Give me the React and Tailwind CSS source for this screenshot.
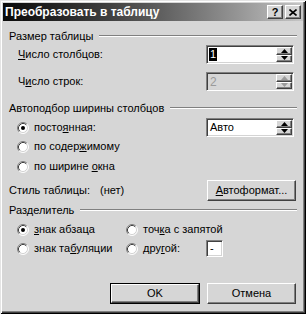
import React from "react";

const sunken =
  "border border-t-[#808080] border-l-[#808080] border-r-white border-b-white shadow-[inset_1px_1px_0_#404040,inset_-1px_-1px_0_#d4d4d4]";
const raised =
  "border border-t-white border-l-white border-r-[#404040] border-b-[#404040] shadow-[inset_-1px_-1px_0_#808080]";

function Spin({ disabled }) {
  const c = disabled ? "#9a9a9a" : "#000";
  return (
    <div className="flex flex-col w-[16px] h-full">
      <div className={`flex-1 flex items-center justify-center bg-[#d6d6d6] ${raised}`}>
        <svg width="7" height="4" viewBox="0 0 7 4">
          <path d="M3.5 0 L7 4 L0 4Z" fill={c} />
        </svg>
      </div>
      <div className={`flex-1 flex items-center justify-center bg-[#d6d6d6] ${raised}`}>
        <svg width="7" height="4" viewBox="0 0 7 4">
          <path d="M0 0 L7 0 L3.5 4Z" fill={c} />
        </svg>
      </div>
    </div>
  );
}

function SpinInput({ children, disabled }) {
  return (
    <div
      className={`w-[88px] h-[19px] flex p-[1px] ${sunken} ${disabled ? "bg-[#d6d6d6]" : "bg-white"}`}
    >
      <div className="flex-1 flex items-center pl-[1px]">{children}</div>
      <Spin disabled={disabled} />
    </div>
  );
}

function Radio({ checked }) {
  return (
    <svg width="12" height="12" viewBox="0 0 12 12" className="shrink-0">
      <circle cx="6" cy="6" r="5" fill="#fff" />
      <path d="M2.11 9.89 A5.5 5.5 0 0 1 9.89 2.11" stroke="#808080" fill="none" />
      <path d="M2.11 9.89 A5.5 5.5 0 0 0 9.89 2.11" stroke="#fff" fill="none" />
      <path d="M2.82 9.18 A4.5 4.5 0 0 1 9.18 2.82" stroke="#404040" fill="none" />
      <path d="M2.82 9.18 A4.5 4.5 0 0 0 9.18 2.82" stroke="#d4d4d4" fill="none" />
      {checked && <circle cx="6" cy="6" r="2" fill="#000" />}
    </svg>
  );
}

function GroupHeader({ children }) {
  return (
    <div className="flex items-center h-[14px] pl-[6px] pr-[6px]">
      <span className="whitespace-nowrap">{children}</span>
      <div className="flex-1 ml-[6px] h-[2px] border-t border-t-[#808080] border-b border-b-white" />
    </div>
  );
}

function Button({ children, def, w }) {
  return (
    <div
      className={`${w} h-full ${def ? "border border-black" : ""} flex`}
    >
      <div className={`flex-1 flex items-center justify-center bg-[#d6d6d6] ${raised}`}>
        {children}
      </div>
    </div>
  );
}

export default function App() {
  return (
    <div
      className="w-[306px] h-[314px] bg-[#d6d6d6] p-[3px] flex flex-col text-[11px] text-black leading-none shadow-[inset_1px_1px_0_#e4e4e4,inset_-1px_-1px_0_#000,inset_2px_2px_0_#fff,inset_-2px_-2px_0_#404040,inset_-3px_-3px_0_#808080]"
      style={{ fontFamily: '"Liberation Sans", Arial, sans-serif' }}
    >
      {/* Title bar */}
      <div className="h-[18px] shrink-0 flex items-center bg-gradient-to-r from-[#0a0a0a] via-[#5a5a5a] to-[#c6c6c6] pl-[2px] pr-[2px]">
        <span className="text-white font-bold text-[12px] whitespace-nowrap">
          Преобразовать в таблицу
        </span>
        <div className="ml-auto flex gap-[2px]">
          <div className={`w-[16px] h-[14px] bg-[#d6d6d6] flex items-center justify-center ${raised}`}>
            <span className="font-bold text-[11px] leading-none">?</span>
          </div>
          <div className={`w-[16px] h-[14px] bg-[#d6d6d6] flex items-center justify-center ${raised}`}>
            <svg width="8" height="7" viewBox="0 0 8 7">
              <path d="M0.5 0.5 L7.5 6.5 M7.5 0.5 L0.5 6.5" stroke="#000" strokeWidth="1.6" />
            </svg>
          </div>
        </div>
      </div>

      {/* Размер таблицы */}
      <div className="mt-[8px]">
        <GroupHeader>Размер таблицы</GroupHeader>
      </div>
      <div className="mt-[2px] h-[19px] flex items-center pl-[15px] pr-[9px]">
        <span>
          <span className="underline">Ч</span>исло столбцов:
        </span>
        <div className="ml-auto">
          <SpinInput>
            <span className="bg-black text-white px-[1px] leading-[13px]">1</span>
          </SpinInput>
        </div>
      </div>
      <div className="mt-[8px] h-[19px] flex items-center pl-[15px] pr-[9px]">
        <span>
          Ч<span className="underline">и</span>сло строк:
        </span>
        <div className="ml-auto">
          <SpinInput disabled>
            <span className="text-[#9a9a9a] text-[12px] pl-[1px]">2</span>
          </SpinInput>
        </div>
      </div>

      {/* Автоподбор */}
      <div className="mt-[10px]">
        <GroupHeader>Автоподбор ширины столбцов</GroupHeader>
      </div>
      <div className="mt-[3px] h-[19px] flex items-center pl-[14px] pr-[9px]">
        <Radio checked />
        <span className="ml-[5px]">
          посто<span className="underline">я</span>нная:
        </span>
        <div className="ml-auto">
          <SpinInput>
            <span className="pl-[1px]">Авто</span>
          </SpinInput>
        </div>
      </div>
      <div className="h-[19px] flex items-center pl-[14px]">
        <Radio />
        <span className="ml-[5px]">
          по содер<span className="underline">ж</span>имому
        </span>
      </div>
      <div className="mt-[1px] h-[19px] flex items-center pl-[14px]">
        <Radio />
        <span className="ml-[5px]">
          по ширине <span className="underline">о</span>кна
        </span>
      </div>
      <div className="mt-[4px] h-[21px] flex items-center pl-[6px] pr-[7px]">
        <span className="w-[91px]">Стиль таблицы:</span>
        <span>(нет)</span>
        <div className="ml-auto h-full">
          <Button w="w-[89px]">
            <span>
              <span className="underline">А</span>втоформат...
            </span>
          </Button>
        </div>
      </div>

      {/* Разделитель */}
      <div className="mt-[2px]">
        <GroupHeader>Разделитель</GroupHeader>
      </div>
      <div className="mt-[3px] h-[19px] flex items-center pl-[14px]">
        <div className="w-[109px] flex items-center">
          <Radio checked />
          <span className="ml-[5px]">
            <span className="underline">з</span>нак абзаца
          </span>
        </div>
        <div className="flex items-center">
          <Radio />
          <span className="ml-[5px]">
            точ<span className="underline">к</span>а с запятой
          </span>
        </div>
      </div>
      <div className="h-[19px] flex items-center pl-[14px]">
        <div className="w-[109px] flex items-center">
          <Radio />
          <span className="ml-[5px]">
            знак та<span className="underline">б</span>уляции
          </span>
        </div>
        <div className="flex items-center">
          <Radio />
          <span className="ml-[5px] w-[63px]">
            дру<span className="underline">г</span>ой:
          </span>
          <div className={`w-[17px] h-[17px] bg-white flex items-center pl-[3px] ${sunken}`}>
            <span>-</span>
          </div>
        </div>
      </div>

      {/* Buttons */}
      <div className="mt-[25px] h-[21px] flex justify-end gap-[7px] pr-[7px]">
        <Button def w="w-[90px]">
          OK
        </Button>
        <Button w="w-[89px]">Отмена</Button>
      </div>
    </div>
  );
}
